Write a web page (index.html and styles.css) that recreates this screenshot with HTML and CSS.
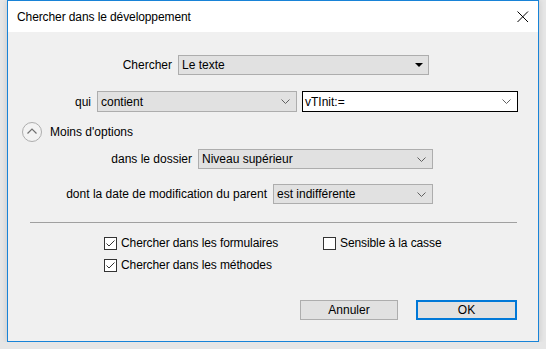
FILE: index.html
```html
<!DOCTYPE html>
<html lang="fr">
<head>
    <meta charset="UTF-8">
    <meta name="viewport" content="width=device-width, initial-scale=1.0">
    <title>Chercher dans le développement</title>
    <link rel="stylesheet" href="styles.css">
</head>
<body>
    <div class="window">
        <div class="titlebar">
            <span class="title">Chercher dans le développement</span>
            <svg class="close" width="12" height="12" viewBox="0 0 12 12">
                <path d="M0.5 0.5 L11 11 M11 0.5 L0.5 11" stroke="#000" stroke-width="1" fill="none"/>
            </svg>
        </div>

        <div class="content">
            <div class="row row-search">
                <span class="label">Chercher</span>
                <div class="select select-search">
                    <span>Le texte</span>
                    <svg width="8" height="5" viewBox="0 0 8 5"><path d="M0 0 H8 L4 4 Z" fill="#000"/></svg>
                </div>
            </div>

            <div class="row row-qui">
                <span class="label">qui</span>
                <div class="select select-qui">
                    <span>contient</span>
                    <svg class="chev" width="9" height="5" viewBox="0 0 9 5"><path d="M0.5 0.5 L4.5 4.5 L8.5 0.5" stroke="#606060" fill="none"/></svg>
                </div>
                <div class="combo">
                    <span>vTInit:=</span>
                    <svg class="chev" width="9" height="5" viewBox="0 0 9 5"><path d="M0.5 0.5 L4.5 4.5 L8.5 0.5" stroke="#606060" fill="none"/></svg>
                </div>
            </div>

            <div class="options">
                <svg width="20" height="20" viewBox="0 0 20 20">
                    <circle cx="10" cy="10" r="9.5" fill="#f3f3f3" stroke="#adadad"/>
                    <path d="M5.5 11.5 L10 7 L14.5 11.5" stroke="#707070" stroke-width="1.2" fill="none"/>
                </svg>
                <span>Moins d'options</span>
            </div>

            <div class="row row-dossier">
                <span class="label">dans le dossier</span>
                <div class="select select-dossier">
                    <span>Niveau supérieur</span>
                    <svg class="chev" width="9" height="5" viewBox="0 0 9 5"><path d="M0.5 0.5 L4.5 4.5 L8.5 0.5" stroke="#606060" fill="none"/></svg>
                </div>
            </div>

            <div class="row row-date">
                <span class="label">dont la date de modification du parent</span>
                <div class="select select-date">
                    <span>est indifférente</span>
                    <svg class="chev" width="9" height="5" viewBox="0 0 9 5"><path d="M0.5 0.5 L4.5 4.5 L8.5 0.5" stroke="#606060" fill="none"/></svg>
                </div>
            </div>

            <div class="separator"></div>

            <div class="checks">
                <div class="check-col check-col-first">
                    <div class="check">
                        <span class="box"><svg width="11" height="11" viewBox="0 0 11 11"><path d="M1.5 5.5 L4 8 L9.5 2.5" stroke="#333" fill="none"/></svg></span>
                        <span>Chercher dans les formulaires</span>
                    </div>
                    <div class="check">
                        <span class="box"><svg width="11" height="11" viewBox="0 0 11 11"><path d="M1.5 5.5 L4 8 L9.5 2.5" stroke="#333" fill="none"/></svg></span>
                        <span>Chercher dans les méthodes</span>
                    </div>
                </div>
                <div class="check-col">
                    <div class="check">
                        <span class="box"></span>
                        <span>Sensible à la casse</span>
                    </div>
                </div>
            </div>

            <div class="buttons">
                <div class="button">Annuler</div>
                <div class="button button-default">OK</div>
            </div>
        </div>
    </div>
</body>
</html>
```

FILE: styles.css
```css
body {
    margin: 0;
    padding: 0;
    background-color: #e6e6e6;
    font-family: "Liberation Sans", Arial, sans-serif;
    font-size: 12px;
    color: #000;
}
.window {
    margin-left: 7px;
    width: 530px;
    height: 340px;
    border: 1px solid #1883d7;
    background-color: #f0f0f0;
    box-shadow: 0 0 6px rgba(0, 0, 0, 0.15);
}
.titlebar {
    height: 31px;
    background-color: #fff;
    display: flex;
    align-items: center;
    justify-content: space-between;
    padding: 0 9px 0 9px;
}
.title {
    font-size: 12px;
    letter-spacing: -0.1px;
}
.close {
    margin-top: 1px;
}
.content {
    padding-top: 23px;
}
.row {
    display: flex;
    align-items: center;
    justify-content: flex-end;
    gap: 6px;
}
.select, .combo {
    box-sizing: border-box;
    height: 20px;
    border: 1px solid #adadad;
    background-color: #e1e1e1;
    display: flex;
    align-items: center;
    justify-content: space-between;
    padding: 0 6px 0 3px;
}
.row-search {
    padding-right: 109px;
}
.select-search {
    width: 251px;
    padding-right: 5px;
}
.row-qui {
    margin-top: 16px;
    padding-right: 20px;
}
.row-qui .select, .combo {
    height: 21px;
}
.select-qui {
    width: 200px;
}
.combo {
    width: 216px;
    margin-left: -1px;
    background-color: #fff;
    border-color: #000;
    padding-left: 2px;
}
.options {
    display: flex;
    align-items: center;
    gap: 8px;
    margin: 10px 0 0 14px;
    height: 20px;
}
.row-dossier {
    margin-top: 7px;
    padding-right: 105px;
}
.select-dossier {
    width: 235px;
}
.row-date {
    margin-top: 15px;
    padding-right: 105px;
}
.select-date {
    width: 160px;
}
.separator {
    height: 1px;
    background-color: #a0a0a0;
    margin: 18px 21px 0 22px;
}
.checks {
    display: flex;
    margin: 12px 0 0 96px;
    letter-spacing: -0.1px;
}
.check-col {
    display: flex;
    flex-direction: column;
    gap: 6px;
}
.check-col-first {
    width: 219px;
}
.check {
    display: flex;
    align-items: center;
    gap: 4px;
    height: 16px;
}
.box {
    box-sizing: border-box;
    width: 13px;
    height: 13px;
    border: 1px solid #333;
    background-color: #fff;
    display: flex;
}
.buttons {
    display: flex;
    justify-content: flex-end;
    gap: 18px;
    margin: 27px 21px 0 0;
}
.button {
    box-sizing: border-box;
    width: 98px;
    height: 20px;
    border: 1px solid #adadad;
    background-color: #e1e1e1;
    text-align: center;
    line-height: 18px;
}
.button-default {
    width: 101px;
    border: 2px solid #0078d7;
    line-height: 16px;
}
```
